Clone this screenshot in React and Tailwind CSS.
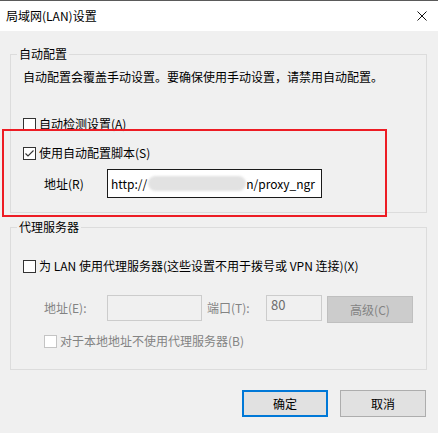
import React from 'react';

const Checkbox = ({ checked, disabled }) => (
  <span
    className={`flex h-[13px] w-[13px] shrink-0 items-center justify-center border bg-white ${
      disabled ? 'border-[#c4c4c4]' : 'border-[#333333]'
    }`}
  >
    {checked && (
      <svg width="11" height="11" viewBox="0 0 11 11">
        <path d="M1.5 5.5 L4 8 L9.5 2.5" fill="none" stroke="#333333" strokeWidth="1.1" />
      </svg>
    )}
  </span>
);

const App = () => {
  return (
    <div className="relative h-[433px] w-[438px] overflow-hidden border-t border-[#5a5a5a] bg-[#f0f0f0] font-['Noto_Sans_CJK_SC',sans-serif] text-[12px] leading-[16px] text-black">
      {/* title bar */}
      <div className="flex h-[30px] items-center justify-between bg-white pl-[6px] pr-[10px]">
        <span>局域网(LAN)设置</span>
        <svg width="10" height="10" viewBox="0 0 10 10" className="mr-[1px]">
          <path d="M0.5 0.5 L9.5 9.5 M9.5 0.5 L0.5 9.5" stroke="#111111" strokeWidth="1" />
        </svg>
      </div>

      <div className="px-[10px] pt-[15px]">
        <fieldset className="w-[417px] border border-[#dcdcdc] px-[12px] pb-[14px]">
          <legend className="-ml-[6px] px-[2px]">自动配置</legend>
          <div className="mt-[7px] h-[16px]">自动配置会覆盖手动设置。要确保使用手动设置，请禁用自动配置。</div>

          <label className="mt-[31px] flex h-[16px] items-center gap-[3px]">
            <Checkbox />
            <span>自动检测设置(A)</span>
          </label>

          <label className="mt-[13px] flex h-[16px] items-center gap-[3px]">
            <Checkbox checked />
            <span>使用自动配置脚本(S)</span>
          </label>

          <div className="mt-[8px] flex h-[29px] items-center">
            <span className="w-[84px] pl-[21px]">地址(R)</span>
            <div className="flex h-[29px] w-[215px] items-center overflow-hidden whitespace-nowrap border border-[#1a1a1a] bg-white pl-[3px] text-[12px]">
              <span>http://</span>
              <span className="ml-[1px] h-[15px] w-[98px] shrink-0 rounded-full bg-[#e2e2e2] blur-[1px]" />
              <span>n/proxy_ngr</span>
            </div>
          </div>
        </fieldset>

        <fieldset className="mt-[6px] w-[417px] border border-[#dcdcdc] px-[12px] pb-[20px]">
          <legend className="-ml-[6px] px-[2px]">代理服务器</legend>

          <label className="mt-[23px] flex h-[16px] items-center gap-[3px]">
            <Checkbox />
            <span>为 LAN 使用代理服务器(这些设置不用于拨号或 VPN 连接)(X)</span>
          </label>

          <div className="mt-[21px] flex h-[28px] items-start text-[#838383]">
            <span className="w-[84px] pl-[21px] leading-[26px]">地址(E):</span>
            <div className="h-[26px] w-[95px] border border-[#cccccc] bg-[#f0f0f0]" />
            <span className="w-[64px] pl-[5px] leading-[26px]">端口(T):</span>
            <div className="h-[26px] w-[56px] border border-[#cccccc] bg-[#f0f0f0] pl-[4px] pt-[1px] text-[13px] text-[#6d6d6d]">
              80
            </div>
            <div className="ml-[5px] mt-[1px] flex h-[27px] w-[86px] items-center justify-center border border-[#bfbfbf] bg-[#cccccc]">
              高级(C)
            </div>
          </div>

          <label className="mt-[10px] flex h-[16px] items-center gap-[3px] pl-[21px] text-[#838383]">
            <Checkbox disabled />
            <span>对于本地地址不使用代理服务器(B)</span>
          </label>
        </fieldset>

        <div className="mt-[20px] flex w-[416px] justify-end gap-[12px]">
          <button className="flex h-[27px] w-[86px] items-center justify-center border-2 border-[#0078d7] bg-[#e1e1e1]">
            确定
          </button>
          <button className="flex h-[27px] w-[86px] items-center justify-center border border-[#adadad] bg-[#e1e1e1]">
            取消
          </button>
        </div>
      </div>

      {/* red annotation */}
      <div className="pointer-events-none absolute left-[2px] top-[128px] h-[88px] w-[385px] border-2 border-[#ed1c24]" />
    </div>
  );
};

export default App;
